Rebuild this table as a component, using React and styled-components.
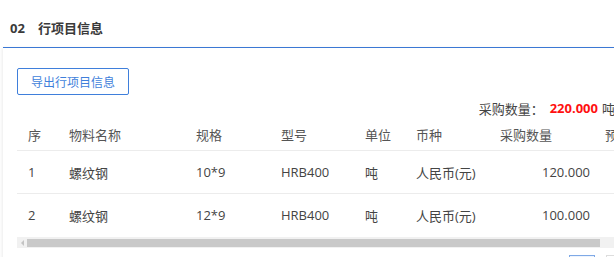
import React from "react";
import styled, { createGlobalStyle } from "styled-components";

const GlobalStyle = createGlobalStyle`
  html, body {
    margin: 0;
    padding: 0;
    background: #ffffff;
    overflow: hidden;
  }
  body {
    font-family: "Open Sans", "Noto Sans CJK SC", sans-serif;
    color: #333333;
  }
`;

const Page = styled.div`
  width: 614px;
  height: 257px;
  overflow: hidden;
`;

const SectionHeader = styled.div`
  display: flex;
  align-items: center;
  gap: 13px;
  height: 47px;
  padding: 8px 0 0 10px;
  box-sizing: border-box;
  font-size: 13px;
  font-weight: 700;
  color: #3a3a3a;
`;

const Title = styled.span`
  font-family: "Noto Sans CJK SC", sans-serif;
`;

const Panel = styled.div`
  margin-left: 3px;
  border-top: 1px solid #3b78d4;
  box-shadow: -1px 1px 3px rgba(0, 0, 0, 0.08);
  padding: 20px 0 0 14px;
  height: 220px;
  box-sizing: border-box;
`;

const ExportButton = styled.button`
  height: 27px;
  width: 112px;
  border: 1px solid #3f7fdb;
  border-radius: 2px;
  background: #ffffff;
  color: #3f7fdb;
  font-family: "Noto Sans CJK SC", sans-serif;
  font-size: 12px;
  padding: 0;
`;

const Summary = styled.div`
  display: flex;
  justify-content: flex-end;
  align-items: center;
  height: 20px;
  margin-top: 3px;
  margin-right: -1px;
  font-family: "Noto Sans CJK SC", sans-serif;
  font-size: 13px;
  white-space: nowrap;
  color: #444444;
`;

const Total = styled.span`
  color: #ff1010;
  font-family: "Open Sans", sans-serif;
  font-weight: 700;
  margin: 0 4px 0 6px;
`;

const TableWrap = styled.div`
  width: 640px;
  overflow: hidden;
`;

const Table = styled.table`
  border-collapse: collapse;
  table-layout: fixed;
  width: 640px;
  font-size: 13px;
`;

const HeadCell = styled.th`
  height: 32px;
  padding: 0 0 0 11px;
  text-align: left;
  font-weight: 400;
  color: #555555;
  border-bottom: 1px solid #ececec;
  white-space: nowrap;
  font-family: "Noto Sans CJK SC", sans-serif;
`;

const Cell = styled.td`
  height: 42px;
  padding: ${(p) => (p.$num ? "0 4px 0 0" : "0 0 0 11px")};
  text-align: ${(p) => (p.$num ? "right" : "left")};
  color: #444444;
  border-bottom: ${(p) => (p.$last ? "none" : "1px solid #ececec")};
  white-space: nowrap;
`;

const ScrollTrack = styled.div`
  display: flex;
  align-items: center;
  height: 11px;
  background: #f1f1f1;
  margin-top: 1px;
`;

const ScrollArrow = styled.div`
  width: 10px;
  display: flex;
  justify-content: center;
  &::before {
    content: "";
    border-style: solid;
    border-width: 3px 3px 3px 0;
    border-color: transparent #c4c4c4 transparent transparent;
  }
`;

const ScrollThumb = styled.div`
  width: 573px;
  height: 8px;
  background: #c9c9c9;
`;

const Pager = styled.div`
  display: flex;
  justify-content: flex-end;
  gap: 11px;
  margin-top: 7px;
  margin-right: -18px;
`;

const PageItem = styled.div`
  width: 24px;
  height: 24px;
  border: 1px solid ${(p) => (p.$active ? "#7fa9e6" : "#dddddd")};
  background: ${(p) => (p.$active ? "#eef4fd" : "#ffffff")};
`;

const columns = [
  { title: "序", width: 41 },
  { title: "物料名称", width: 127 },
  { title: "规格", width: 85 },
  { title: "型号", width: 84 },
  { title: "单位", width: 51 },
  { title: "币种", width: 84 },
  { title: "采购数量", width: 105 },
  { title: "预", width: 63 },
];

const rows = [
  { no: "1", name: "螺纹钢", spec: "10*9", model: "HRB400", unit: "吨", currency: "人民币(元)", qty: "120.000" },
  { no: "2", name: "螺纹钢", spec: "12*9", model: "HRB400", unit: "吨", currency: "人民币(元)", qty: "100.000" },
];

export default function App() {
  return (
    <Page>
      <GlobalStyle />
      <SectionHeader>
        <span>02</span>
        <Title>行项目信息</Title>
      </SectionHeader>
      <Panel>
        <ExportButton>导出行项目信息</ExportButton>
        <Summary>
          采购数量：<Total>220.000</Total>吨
        </Summary>
        <TableWrap>
          <Table>
            <colgroup>
              {columns.map((c) => (
                <col key={c.title} style={{ width: c.width }} />
              ))}
            </colgroup>
            <thead>
              <tr>
                {columns.map((c) => (
                  <HeadCell key={c.title}>{c.title}</HeadCell>
                ))}
              </tr>
            </thead>
            <tbody>
              {rows.map((r, i) => {
                const last = i === rows.length - 1;
                return (
                  <tr key={r.no}>
                    <Cell $last={last}>{r.no}</Cell>
                    <Cell $last={last}>{r.name}</Cell>
                    <Cell $last={last}>{r.spec}</Cell>
                    <Cell $last={last}>{r.model}</Cell>
                    <Cell $last={last}>{r.unit}</Cell>
                    <Cell $last={last}>{r.currency}</Cell>
                    <Cell $last={last} $num>{r.qty}</Cell>
                    <Cell $last={last}></Cell>
                  </tr>
                );
              })}
            </tbody>
          </Table>
          <ScrollTrack>
            <ScrollArrow />
            <ScrollThumb />
          </ScrollTrack>
        </TableWrap>
        <Pager>
          <PageItem $active />
          <PageItem />
        </Pager>
      </Panel>
    </Page>
  );
}
